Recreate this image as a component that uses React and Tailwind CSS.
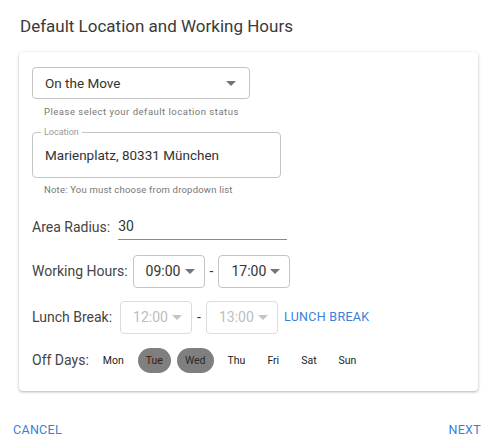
import React from 'react';

function Caret({ disabled }) {
  return (
    <svg width="10" height="5" viewBox="0 0 10 5" className="shrink-0">
      <path d="M0 0 L10 0 L5 5 Z" fill={disabled ? '#c4c4c4' : '#757575'} />
    </svg>
  );
}

function TimeSelect({ value, disabled }) {
  return (
    <div
      className={
        'flex items-center justify-between w-[72px] h-[33px] rounded border pl-[12px] pr-[9px] text-[14px] ' +
        (disabled ? 'border-[#dcdcdc] text-[#bdbdbd]' : 'border-[#c4c4c4] text-[#333]')
      }
    >
      <span>{value}</span>
      <Caret disabled={disabled} />
    </div>
  );
}

const days = [
  { d: 'Mon', on: false },
  { d: 'Tue', on: true },
  { d: 'Wed', on: true },
  { d: 'Thu', on: false },
  { d: 'Fri', on: false },
  { d: 'Sat', on: false },
  { d: 'Sun', on: false },
];

export default function App() {
  return (
    <div className="w-[497px] h-[448px] bg-white flex flex-col font-['Roboto',sans-serif] text-[#333]">
      {/* header */}
      <h2 className="px-[20px] pt-[14px] text-[17px] leading-[24px] text-[#3a3a3a]">
        Default Location and Working Hours
      </h2>

      {/* card */}
      <div className="mx-[19px] mt-[14px] h-[339px] rounded bg-white shadow-[0_1px_3px_rgba(0,0,0,0.3)] pl-[13px] pt-[15px] flex flex-col">
        <div className="flex items-center justify-between w-[218px] h-[32px] rounded border border-[#c4c4c4] pl-[12px] pr-[13px] text-[13.5px]">
          <span>On the Move</span>
          <Caret />
        </div>
        <p className="mt-[6px] ml-[12px] text-[9.5px] leading-[13px] text-[#777] tracking-[0.5px]">
          Please select your default location status
        </p>

        <fieldset className="mt-[9px] w-[249px] h-[51px] rounded border border-[#c4c4c4] px-[8px]">
          <legend className="px-[3px] text-[9px] leading-[10px] text-[#999]">Location</legend>
          <div className="pl-[4px] pt-[8px] text-[13.5px] leading-[20px]">Marienplatz, 80331 München</div>
        </fieldset>
        <p className="mt-[5px] ml-[12px] text-[9.5px] leading-[13px] text-[#777] tracking-[0.2px]">
          Note: You must choose from dropdown list
        </p>

        <div className="mt-[18px] flex items-end h-[26px]">
          <span className="text-[14px] leading-[20px] text-[#444] pb-[3px]">Area Radius:</span>
          <div className="ml-[8px] w-[169px] border-b border-[#8a8a8a] text-[14px] leading-[20px] pb-[3px]">30</div>
        </div>

        <div className="mt-[15px] flex items-center">
          <span className="text-[14px] text-[#444] mr-[5px]">Working Hours:</span>
          <TimeSelect value="09:00" />
          <span className="mx-[5px] text-[14px]">-</span>
          <TimeSelect value="17:00" />
        </div>

        <div className="mt-[13px] flex items-center">
          <span className="text-[14px] text-[#444] mr-[8px]">Lunch Break:</span>
          <TimeSelect value="12:00" disabled />
          <span className="mx-[5px] text-[14px]">-</span>
          <TimeSelect value="13:00" disabled />
          <span className="ml-[6px] text-[12.5px] text-[#3a7fd9] tracking-[0.3px]">LUNCH BREAK</span>
        </div>

        <div className="mt-[14px] flex items-center">
          <span className="text-[14px] text-[#444] mr-[6px]">Off Days:</span>
          <div className="flex items-center gap-[6px]">
            {days.map((x) => (
              <span
                key={x.d}
                className={
                  'h-[25px] px-[8px] rounded-full flex items-center justify-center text-[10.5px] ' +
                  (x.on ? 'bg-[#7f7f7f] ' + (x.d === 'Tue' ? 'text-[#3b1a0a]' : 'text-[#2a2a2a]') : 'text-[#222]')
                }
              >
                {x.d}
              </span>
            ))}
          </div>
        </div>
      </div>

      {/* footer */}
      <div className="mt-auto mb-[8px] flex justify-between px-[13px] text-[12.5px] text-[#3a7fd9] tracking-[0.3px]">
        <span>CANCEL</span>
        <span className="mr-[3px]">NEXT</span>
      </div>
    </div>
  );
}
